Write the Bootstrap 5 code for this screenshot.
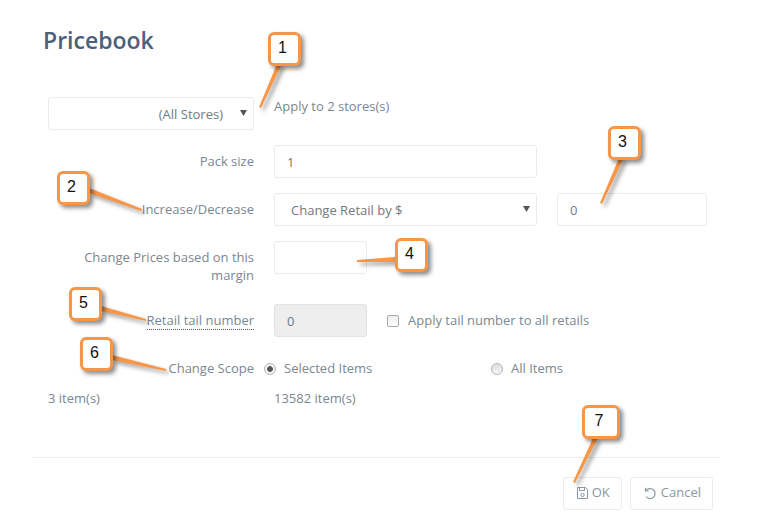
<!DOCTYPE html>
<html lang="en">
<head>
  <meta charset="UTF-8">
  <meta name="viewport" content="width=device-width, initial-scale=1">
  <title>Pricebook</title>
  <link href="https://cdn.jsdelivr.net/npm/bootstrap@5.3.3/dist/css/bootstrap.min.css" rel="stylesheet">
  <style>
    html, body { background: #fff; height: 521px; overflow: hidden; }
    body { font-family: "Open Sans", sans-serif; font-size: 13px; color: #7a8790; position: relative; }
    .page-wrap { padding: 24px 40px 0 32px; }
    .page-title { font-family: "Open Sans", sans-serif; font-size: 23px; font-weight: 600; color: #4c6079; line-height: 33px; margin: 0 0 40px 11px; }
    .form-line { display: flex; margin-bottom: 15px; min-height: 33px; }
    .label-col { width: 222px; padding-left: 16px; text-align: right; flex: none; line-height: 18px; padding-top: 7px; margin-right: 20px; }
    .label-col.no-pad { padding-top: 0; }
    .form-control, .form-select { height: 33px; font-size: 13px; color: #6f7a82; border: 1px solid #ebebeb; border-radius: 3px; padding: 4px 12px; box-shadow: none; font-family: "Open Sans", sans-serif; }
    .form-select { background-image: url("data:image/svg+xml,%3Csvg xmlns='http://www.w3.org/2000/svg' width='7' height='6'%3E%3Cpath d='M0 0h7L3.500 6z' fill='%23555'/%3E%3C/svg%3E"); background-size: 7px 6px; background-position: right 6px top 12px; padding: 5px 12px 3px 16px; }
    .form-control:disabled { background: #eee; border-color: #e2e2e2; }
    .wide-field { width: 263px; flex: none; }
    .short-field { width: 93px; flex: none; }
    .tail-field { width: 150px; flex: none; margin-left: 20px; }
    .store-select { width: 206px; flex: none; margin: 0 20px 0 16px; text-align: right; text-align-last: right; padding-right: 30px; }
    .tail-label { border-bottom: 1px dotted #555; }
    .check-box { appearance: none; width: 12px; height: 12px; border: 1px solid #aaa; border-radius: 2px; background: linear-gradient(#eee, #fff); margin: 0 9px 0 20px; flex: none; }
    .radio-box { appearance: none; width: 12px; height: 12px; border: 1px solid #b5b5b5; border-radius: 50%; background: linear-gradient(#ddd, #f6f6f6); margin: 0 8px 0 -10px; flex: none; }
    .radio-box:checked { background: radial-gradient(circle, #555 0 2.500px, #f2f2f2 3.200px); }
    .scope-opt { width: 227px; }
    .margin-line { margin-bottom: 20px; }
    .count-line { margin-top: 4px; }
    .foot-line { border-top: 1px solid #eee; margin: 48px 0 0 0; padding: 19px 6px 0 0; }
    .foot-btn { height: 33px; font-size: 13px; color: #8b979e; border: 1px solid #ebebeb; border-radius: 3px; background: #fff; padding: 0 11px 0 13px; display: flex; align-items: center; gap: 4px; font-family: "Open Sans", sans-serif; }
    .callout { position: absolute; width: 33px; height: 34px; background: #fff; border: 3px solid #f79646; border-radius: 6px; color: #111; font-family: "Liberation Sans", sans-serif; font-size: 16px; line-height: 26px; padding-right: 4px; text-align: center; box-shadow: 3px 3px 4px rgba(0,0,0,.45); }
    .tails { position: absolute; left: 0; top: 0; filter: drop-shadow(3px 3px 2px rgba(0,0,0,.4)); }
  </style>
</head>
<body>
  <div class="page-wrap">
    <h1 class="page-title">Pricebook</h1>

    <div class="form-line">
      <select class="form-select store-select"><option>(All Stores)</option></select>
      <div>Apply to 2 stores(s)</div>
    </div>

    <div class="form-line">
      <div class="label-col">Pack size</div>
      <input class="form-control wide-field" value="1">
    </div>

    <div class="form-line">
      <div class="label-col">Increase/Decrease</div>
      <select class="form-select wide-field"><option>Change Retail by $</option></select>
      <input class="form-control tail-field" value="0">
    </div>

    <div class="form-line margin-line">
      <div class="label-col">Change Prices based on this margin</div>
      <input class="form-control short-field">
    </div>

    <div class="form-line">
      <div class="label-col"><span class="tail-label">Retail tail number</span></div>
      <input class="form-control short-field" value="0" disabled>
      <div class="d-flex align-items-center">
        <input type="checkbox" class="check-box">
        <span>Apply tail number to all retails</span>
      </div>
    </div>

    <div class="form-line mb-0">
      <div class="label-col">Change Scope</div>
      <div class="d-flex align-items-center scope-opt">
        <input type="radio" name="scope" class="radio-box" checked>
        <span>Selected Items</span>
      </div>
      <div class="d-flex align-items-center">
        <input type="radio" name="scope" class="radio-box">
        <span>All Items</span>
      </div>
    </div>

    <div class="d-flex count-line">
      <div class="label-col no-pad text-start">3 item(s)</div>
      <div>13582 item(s)</div>
    </div>

    <div class="foot-line d-flex justify-content-end gap-2">
      <button type="button" class="foot-btn">
        <svg width="11" height="12" viewBox="0 0 11 12" fill="none" stroke="#8b979e"><path d="M.5.500h8l2 2v9H.5z"/><path d="M2.500.500v3h5v-3"/><circle cx="5.500" cy="8" r="1.700"/></svg>
        OK
      </button>
      <button type="button" class="foot-btn">
        <svg width="13" height="13" viewBox="0 0 13 13" fill="none" stroke="#8b979e" stroke-width="1.200"><path d="M2.200 3.400A5 5 0 1 1 2 9.500"/><path d="M1.500.8v3.200h3.200"/></svg>
        Cancel
      </button>
    </div>
  </div>

  <svg class="tails" width="759" height="521" fill="#f79646">
    <polygon points="277,64 282,64 261,108 259,107"/>
    <polygon points="89,188 89,193 141,211 142,209"/>
    <polygon points="619,158 624,158 602,204 600,203"/>
    <polygon points="395,257 395,262 357,262 357,260"/>
    <polygon points="101,306 101,311 146,321 146,319"/>
    <polygon points="112,355 112,360 166,371 166,369"/>
    <polygon points="593,438 598,438 575,483 573,482"/>
  </svg>
  <div class="callout" style="left:268px;top:32px">1</div>
  <div class="callout" style="left:57px;top:171px">2</div>
  <div class="callout" style="left:608px;top:126px">3</div>
  <div class="callout" style="left:395px;top:238px">4</div>
  <div class="callout" style="left:69px;top:287px">5</div>
  <div class="callout" style="left:80px;top:337px">6</div>
  <div class="callout" style="left:582px;top:405px;width:38px">7</div>

  <script src="https://cdn.jsdelivr.net/npm/bootstrap@5.3.3/dist/js/bootstrap.bundle.min.js"></script>
</body>
</html>
